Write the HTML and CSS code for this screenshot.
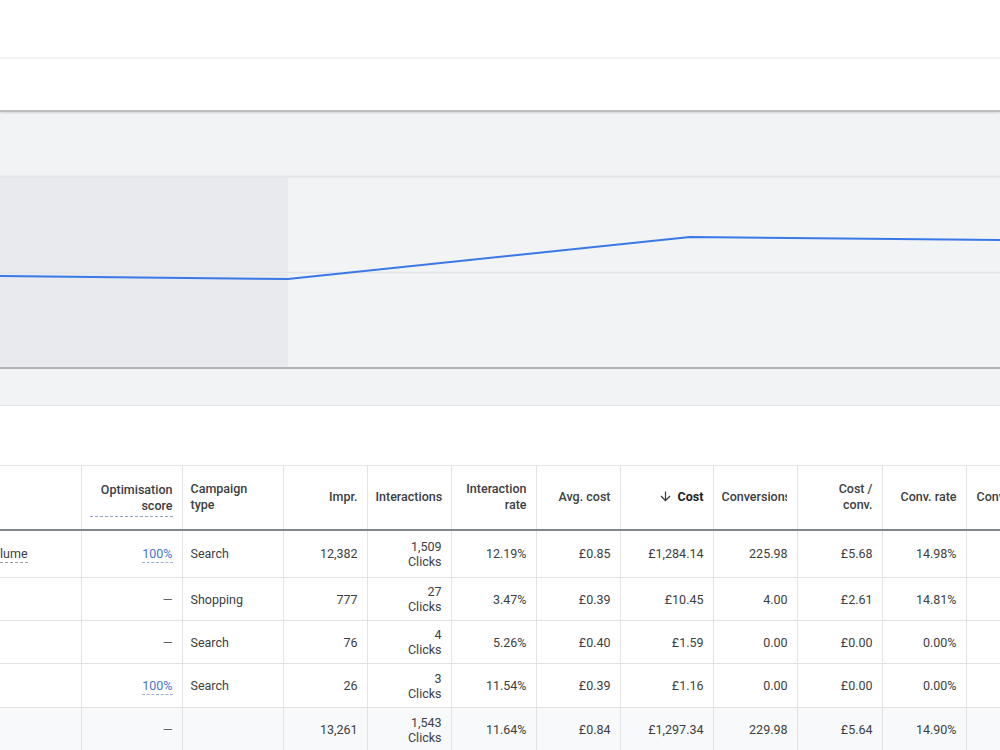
FILE: index.html
```html
<!DOCTYPE html>
<html lang="en">
<head>
  <meta charset="UTF-8" />
  <meta name="viewport" content="width=device-width, initial-scale=1.0"/>
  <title>Campaigns</title>
  <link rel="stylesheet" href="styles.css">
</head>
<body>
  <div class="topbar"></div>
  <div class="filterbar"></div>

  <section class="chart-card">
    <svg class="chart" viewBox="0 0 1000 194" preserveAspectRatio="none">
      <rect x="0" y="2" width="288" height="190" fill="#e8eaed"/>
      <line x1="0" y1="1.5" x2="1000" y2="1.5" stroke="#e3e5e8" stroke-width="2"/>
      <line x1="0" y1="97.5" x2="1000" y2="97.5" stroke="#e3e5e8" stroke-width="1.5"/>
      <line x1="0" y1="193" x2="1000" y2="193" stroke="#9aa0a6" stroke-width="1.5"/>
      <polyline points="0,101 288,104 690,62 1000,65" fill="none" stroke="#3b78e7" stroke-width="2"/>
    </svg>
  </section>

  <div class="table-wrap">
    <table class="campaigns">
      <colgroup>
        <col style="width:81px"><col style="width:101px"><col style="width:101px">
        <col style="width:84px"><col style="width:84px"><col style="width:85px">
        <col style="width:84px"><col style="width:93px"><col style="width:84px">
        <col style="width:85px"><col style="width:84px"><col style="width:100px">
      </colgroup>
      <thead>
        <tr>
          <th></th>
          <th class="num"><span class="hint">Optimisation score</span></th>
          <th>Campaign<br>type</th>
          <th class="num">Impr.</th>
          <th class="num">Interactions</th>
          <th class="num">Interaction<br>rate</th>
          <th class="num">Avg. cost</th>
          <th class="num sorted">
            <svg class="arrow" viewBox="0 0 24 24"><path d="M20 12l-1.41-1.41L13 16.17V4h-2v12.17l-5.58-5.59L4 12l8 8 8-8z"/></svg>Cost
          </th>
          <th><span class="clip">Conversions</span></th>
          <th class="num">Cost /<br>conv.</th>
          <th class="num">Conv. rate</th>
          <th class="last">Conv. value</th>
        </tr>
      </thead>
      <tbody>
        <tr class="r1">
          <td class="name"><span class="hint-grey">lume</span></td>
          <td class="num"><span class="score">100%</span></td>
          <td>Search</td>
          <td class="num">12,382</td>
          <td class="num">1,509<br>Clicks</td>
          <td class="num">12.19%</td>
          <td class="num">£0.85</td>
          <td class="num">£1,284.14</td>
          <td class="num">225.98</td>
          <td class="num">£5.68</td>
          <td class="num">14.98%</td>
          <td></td>
        </tr>
        <tr class="r2">
          <td class="name"></td>
          <td class="num dash">—</td>
          <td>Shopping</td>
          <td class="num">777</td>
          <td class="num">27<br>Clicks</td>
          <td class="num">3.47%</td>
          <td class="num">£0.39</td>
          <td class="num">£10.45</td>
          <td class="num">4.00</td>
          <td class="num">£2.61</td>
          <td class="num">14.81%</td>
          <td></td>
        </tr>
        <tr class="r3">
          <td class="name"></td>
          <td class="num dash">—</td>
          <td>Search</td>
          <td class="num">76</td>
          <td class="num">4<br>Clicks</td>
          <td class="num">5.26%</td>
          <td class="num">£0.40</td>
          <td class="num">£1.59</td>
          <td class="num">0.00</td>
          <td class="num">£0.00</td>
          <td class="num">0.00%</td>
          <td></td>
        </tr>
        <tr class="r4">
          <td class="name"></td>
          <td class="num"><span class="score">100%</span></td>
          <td>Search</td>
          <td class="num">26</td>
          <td class="num">3<br>Clicks</td>
          <td class="num">11.54%</td>
          <td class="num">£0.39</td>
          <td class="num">£1.16</td>
          <td class="num">0.00</td>
          <td class="num">£0.00</td>
          <td class="num">0.00%</td>
          <td></td>
        </tr>
        <tr class="total">
          <td class="name"></td>
          <td class="num dash">—</td>
          <td></td>
          <td class="num">13,261</td>
          <td class="num">1,543<br>Clicks</td>
          <td class="num">11.64%</td>
          <td class="num">£0.84</td>
          <td class="num">£1,297.34</td>
          <td class="num">229.98</td>
          <td class="num">£5.64</td>
          <td class="num">14.90%</td>
          <td></td>
        </tr>
      </tbody>
    </table>
  </div>
</body>
</html>
```

FILE: styles.css
```css
body {
  margin: 0;
  font-family: Roboto, 'Liberation Sans', sans-serif;
  background: #ffffff;
  color: #3c4043;
  overflow: hidden;
}

.topbar {
  height: 57px;
  border-bottom: 2px solid #f3f3f3;
}

.filterbar {
  height: 51px;
  border-bottom: 2px solid #bdbdbd;
  box-shadow: 0 1px 2px rgba(0,0,0,0.12);
  position: relative;
}

.chart-card {
  background: #f1f3f4;
  padding: 63px 0 36px;
  border-bottom: 1px solid #e3e4e6;
}

.chart {
  display: block;
  width: 100%;
  height: 194px;
}

.table-wrap {
  margin-top: 59px;
  width: 1000px;
  overflow: hidden;
}

.campaigns {
  table-layout: fixed;
  border-collapse: collapse;
  width: 1066px;
  font-size: 12.5px;
}

.campaigns th,
.campaigns td {
  border-left: 1px solid #e3e3e3;
  padding: 0 9px 0 8px;
  text-align: left;
  vertical-align: middle;
  white-space: nowrap;
  overflow: hidden;
}

.campaigns th:first-child,
.campaigns td:first-child {
  border-left: none;
  padding-left: 0;
}

.campaigns thead tr {
  height: 64px;
  border-top: 1px solid #e8e8e8;
  border-bottom: 2px solid #80868b;
}

.campaigns th {
  font-size: 12.5px;
  font-weight: 500;
  line-height: 16px;
  white-space: normal;
  color: #3c4043;
}

.clip {
  display: block;
  white-space: nowrap;
  overflow: hidden;
  margin-right: 1px;
}

.campaigns th.last {
  padding-left: 10px;
  white-space: nowrap;
}

.campaigns .num {
  text-align: right;
}

.campaigns th.sorted {
  color: #202124;
  font-weight: 700;
}

.arrow {
  width: 15px;
  height: 15px;
  fill: #3c4043;
  vertical-align: -3px;
  margin-right: 5px;
}

.hint {
  display: inline-block;
  border-bottom: 1px dashed #8fa6cf;
  padding-bottom: 2px;
  margin-top: 4px;
}

.campaigns td {
  line-height: 15px;
  border-top: 1px solid #e3e3e3;
}

.campaigns tr.r1 { height: 48px; }
.campaigns tr.r2 { height: 43px; }
.campaigns tr.r3 { height: 43px; }
.campaigns tr.r4 { height: 44px; }
.campaigns tr.total { height: 44px; background: #f8f9fa; }

.campaigns tr.r1 td { border-top: none; }

.score {
  color: #4a76d4;
  border-bottom: 1px dashed #9bb0d8;
  padding-bottom: 1px;
}

.hint-grey {
  border-bottom: 1px dashed #9aa0a6;
  padding-bottom: 1px;
}

.dash {
  color: #5f6368;
}
```
